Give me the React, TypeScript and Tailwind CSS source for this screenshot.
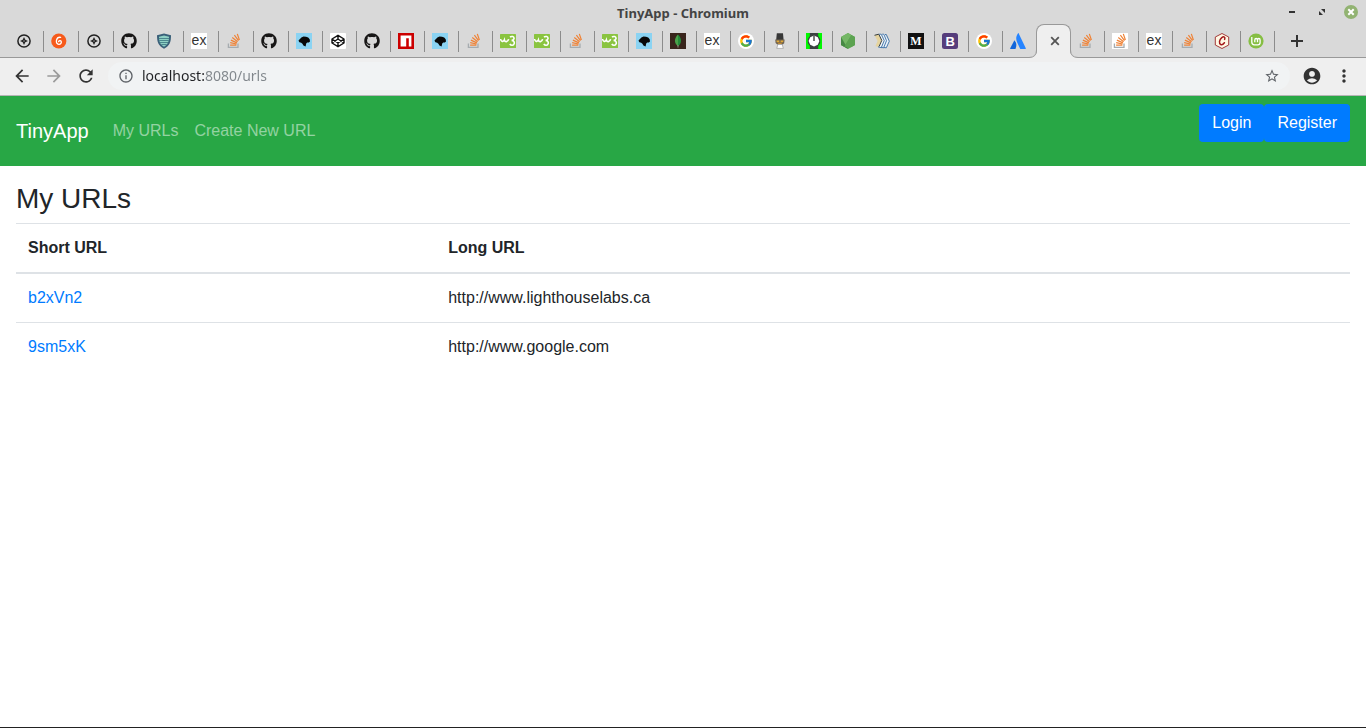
import type { ReactNode } from "react";
import { FaGithub } from "react-icons/fa";
import { FcGoogle } from "react-icons/fc";
import {
  MdAccountCircle,
  MdArrowBack,
  MdArrowForward,
  MdInfoOutline,
  MdMoreVert,
  MdRefresh,
  MdStarBorder,
} from "react-icons/md";

function Svg({ children }: { children: ReactNode }) {
  return (
    <svg viewBox="0 0 16 16" className="size-4 shrink-0" aria-hidden="true">
      {children}
    </svg>
  );
}

const Compass = () => (
  <Svg>
    <circle cx="8" cy="8" r="6.1" fill="none" stroke="#222" strokeWidth="1.5" />
    <path d="M8 4 9.3 6.7 12 8 9.3 9.3 8 12 6.7 9.3 4 8 6.7 6.7Z" fill="#222" />
    <circle cx="8" cy="8" r="0.8" fill="#999" />
  </Svg>
);

const Gitbook = () => (
  <Svg>
    <circle cx="7.8" cy="8" r="7.6" fill="#f65a1b" />
    <path
      d="M9.6 4.3C7.8 4 6 5.2 5.5 7.2C5 9.6 6 11.4 7.9 11.3C9.8 11.2 10.7 9.6 10.2 8.4C9.7 7.4 8.2 7.5 7.6 8.6"
      fill="none"
      stroke="#fff"
      strokeWidth="1.3"
      strokeLinecap="round"
    />
  </Svg>
);

const Github = () => <FaGithub className="size-4 shrink-0 text-[#181717]" aria-hidden="true" />;

const Shield = () => (
  <Svg>
    <path d="M8 .4 15 2.3C15 8.7 14 12.8 8 15.8 2 12.8 1 8.7 1 2.3Z" fill="#3a6079" />
    <path d="M8 2.4 13 3.8C12.9 8.4 12.2 11.3 8 13.7 3.8 11.3 3.1 8.4 3 3.8Z" fill="#8ed0c4" />
    <path d="M3 5.5H13M3.3 7.5H12.7M4 9.5H12M5.4 11.5H10.6" stroke="#3a7480" strokeWidth=".8" />
  </Svg>
);

const Express = () => (
  <Svg>
    <rect width="16" height="16" fill="#fff" />
    <text
      x="8"
      y="12"
      textAnchor="middle"
      className="fill-[#333] font-['Liberation_Sans',sans-serif] text-[14px]"
    >
      ex
    </text>
  </Svg>
);

const StackOverflow = () => (
  <Svg>
    <path d="M2.4 10.4V14.4H12V10.4" fill="none" stroke="#a6acb0" strokeWidth="1.3" />
    <path
      d="M4.1 12.1H10.4M4.2 9.7 10.5 11M4.9 7.1 10.9 9.9M6.3 4.5 11.6 8.7M8.4 2.2 12.5 7.6M11.3.9 13.4 7"
      stroke="#ef8236"
      strokeWidth="1.2"
    />
  </Svg>
);

const StackOverflowWhite = () => (
  <span className="flex size-4 shrink-0 bg-white">
    <StackOverflow />
  </span>
);

const DogHead = () => (
  <Svg>
    <rect width="16" height="16" fill="#8bd3f2" />
    <path
      d="M2.6 7.2 4 6 5.4 4.4 7.5 3.5 10 3.8 12.2 4.5 13.7 6.2 14 8.4 12.8 9.6 11.2 9.6 10.2 10.6 9.6 13.4 7.4 12.6 6.4 10.8 5.2 9.8 3.4 9.2 2.8 8.2Z"
      fill="#080808"
    />
  </Svg>
);

const Codepen = () => (
  <Svg>
    <rect width="16" height="16" rx="1" fill="#fff" />
    <path
      d="M8 2.3 14 6V10L8 13.7 2 10V6ZM8 2.3V6L2 10M8 6 14 10M8 13.7V10L2 6M8 10 14 6"
      fill="none"
      stroke="#111"
      strokeWidth="1.4"
      strokeLinejoin="round"
    />
  </Svg>
);

const Npm = () => (
  <Svg>
    <rect width="16" height="16" fill="#c00" />
    <path d="M2.6 2.6H13.4V13.4H10.8V5.3H8.2V13.4H2.6Z" fill="#fff" />
  </Svg>
);

const W3 = () => (
  <Svg>
    <rect y="1" width="16" height="14" rx=".6" fill="#8ac440" />
    <path
      d="M.6 6C.9 8.6 3.4 9.4 4.4 6.8 4.9 9.4 8 9.3 8.6 6.2M10 4C11.5 2.9 14.3 3.5 14 5.6 13.8 7 12.5 7.4 11.6 7.4 13.2 7.5 14.7 8.5 14.2 10.6 13.6 12.8 11 12.8 9.8 11"
      fill="none"
      stroke="#fff"
      strokeWidth="1.6"
    />
  </Svg>
);

const Mongo = () => (
  <Svg>
    <rect width="16" height="16" fill="#39251c" />
    <path d="M8 1.5C3.8 5.5 4 10.6 8 13Z" fill="#4aa24a" />
    <path d="M8 1.5C12.2 5.5 12 10.6 8 13Z" fill="#248b3a" />
    <path d="M8 12V14.6" stroke="#b8bba5" strokeWidth=".7" />
  </Svg>
);

const Google = () => (
  <span className="flex size-4 shrink-0 items-center justify-center rounded-full bg-white">
    <FcGoogle className="size-[14px]" aria-hidden="true" />
  </span>
);

const Mascot = () => (
  <Svg>
    <path d="M4.8.3H11L11.6 7H4.2Z" fill="#373737" />
    <path d="M3.2 6.5H12.6L12.2 10.2 10.6 11.5H5.2L3.6 10Z" fill="#6e6252" />
    <path d="M4.4 7.4H7.3V9.3H4.8ZM8.6 7.4H11.6L11 9.3H8.6Z" fill="#e0a937" />
    <path d="M5.5 9.7H10.2L9.3 11.1H6.4Z" fill="#c78b2c" />
    <path d="M5.8 11.4H10.2L11.3 15.4H4.8Z" fill="#fff" stroke="#8d8d8d" strokeWidth=".6" />
  </Svg>
);

const Watch = () => (
  <Svg>
    <rect width="16" height="16" fill="#00f800" />
    <path d="M3.8 0H12.2V3L14.2 6V10L12.2 13V16H3.8V13L1.8 10V6L3.8 3Z" fill="#3b4140" />
    <path d="M8 2.6 11.8 4.2 13.4 8 11.8 11.8 8 13.4 4.2 11.8 2.6 8 4.2 4.2Z" fill="#fff" />
    <path d="M8 2.6V8" stroke="#333" strokeWidth="1.3" />
  </Svg>
);

const NodeHex = () => (
  <Svg>
    <path d="M8 0 15 4V12L8 16 1 12V4Z" fill="#5ca351" />
    <path d="M8 0 1 4V12L4.2 13.8 11.4 2Z" fill="#75b766" />
    <path d="M1 4 8 16 1 12Z" fill="#468844" />
    <path d="M11.4 2 15 4V12L11 14.3 4.3 13.7Z" fill="#5ca351" />
  </Svg>
);

const Books = () => (
  <Svg>
    <path d="M.5 2.3 5 1 8 7.3 5.5 14.5 1.5 13 3.6 8Z" fill="#e5d39e" />
    <path d="M5 1H7.2L10.4 7.3 7.5 15 4.6 13.6 7.4 7.4Z" fill="#f3f7f8" />
    <path d="M8.3 1H10.3L15.5 8.4 12 15 7.8 13.8 10.7 8Z" fill="#eaf3fb" />
    <path d="M.5 2.3 4.8 1.2 7.8 7.4 5.1 13.5" fill="none" stroke="#353c42" strokeWidth="1" />
    <path
      d="M5.2 1.2H7.2L10.2 7.5 7.3 14.7 4 13.8M8.2 1.2H9.8L12.5 7.7 9.6 14.9 7 14.2M11 1.5H12.3L15.3 8.2 12.3 14.8 9.8 14.5"
      fill="none"
      stroke="#386da5"
      strokeWidth=".9"
    />
  </Svg>
);

const Medium = () => (
  <Svg>
    <rect width="16" height="16" fill="#111" />
    <text x="8" y="12.3" textAnchor="middle" fontSize="12" fontWeight="700" fontFamily="Liberation Serif, serif" fill="#fff">
      M
    </text>
  </Svg>
);

const Bootstrap = () => (
  <Svg>
    <rect width="16" height="16" rx="2.5" fill="#563d7c" />
    <text x="8.2" y="12.6" textAnchor="middle" fontSize="13" fontWeight="700" fontFamily="Liberation Sans, sans-serif" fill="#fff">
      B
    </text>
  </Svg>
);

const Atlassian = () => (
  <Svg>
    <path d="M4.4 7.2C6.8 9.7 6.8 12.5 5.5 16H.6C.1 16 0 15.7.2 15.3Z" fill="#1266db" />
    <path d="M7.9.4C8.1 0 8.5 0 8.7.4L15.8 15.3C16 15.7 15.8 16 15.4 16H10.8C10.4 16 10.2 15.8 10 15.4L7.1 9.3C5.8 6.3 5.8 3.3 7.9.4Z" fill="#2684ff" />
  </Svg>
);

const Chai = () => (
  <Svg>
    <path d="M8 .5 14.7 4V12L8 15.5 1.3 12V4Z" fill="#fff8e4" stroke="#a33a3a" strokeWidth="1" />
    <path
      d="M10.6 6.4C11.6 4.1 9.8 3 7.8 4.6 5.2 6.6 4.7 10.6 6.7 11.5 8.1 12 9.4 11.1 10.4 9.7"
      fill="none"
      stroke="#a3181b"
      strokeWidth="1.5"
      strokeLinecap="round"
    />
  </Svg>
);

const Mint = () => (
  <Svg>
    <circle cx="8" cy="8" r="7.6" fill="#86be43" />
    <path
      d="M3.8 4.1V9.1C3.8 10.9 4.7 11.8 6.3 11.8H9.8C11.3 11.8 12.1 10.9 12.1 9.5V6.9C12.1 5 9.5 5 9.5 6.9V9.2M9.5 6.9C9.5 5 6.8 5 6.8 6.9V9.2"
      fill="none"
      stroke="#fff"
      strokeWidth="1.3"
    />
  </Svg>
);

type Tab = { name: string; Icon: () => ReactNode };

const wideTabs: Tab[] = [
  { name: "Compass", Icon: Compass },
  { name: "GitBook", Icon: Gitbook },
  { name: "Compass", Icon: Compass },
  { name: "GitHub", Icon: Github },
  { name: "Shield", Icon: Shield },
  { name: "Express", Icon: Express },
  { name: "Stack Overflow", Icon: StackOverflow },
  { name: "GitHub", Icon: Github },
];

const narrowTabs: Tab[] = [
  { name: "Guide", Icon: DogHead },
  { name: "CodePen", Icon: Codepen },
  { name: "GitHub", Icon: Github },
  { name: "npm", Icon: Npm },
  { name: "Guide", Icon: DogHead },
  { name: "Stack Overflow", Icon: StackOverflow },
  { name: "W3Schools", Icon: W3 },
  { name: "W3Schools", Icon: W3 },
  { name: "Stack Overflow", Icon: StackOverflow },
  { name: "W3Schools", Icon: W3 },
  { name: "Guide", Icon: DogHead },
  { name: "MongoDB", Icon: Mongo },
  { name: "Express", Icon: Express },
  { name: "Google", Icon: Google },
  { name: "Mascot", Icon: Mascot },
  { name: "Watch", Icon: Watch },
  { name: "Node.js", Icon: NodeHex },
  { name: "Books", Icon: Books },
  { name: "Medium", Icon: Medium },
  { name: "Bootstrap", Icon: Bootstrap },
  { name: "Google", Icon: Google },
  { name: "Atlassian", Icon: Atlassian },
];

const trailingTabs: Tab[] = [
  { name: "Stack Overflow", Icon: StackOverflow },
  { name: "Stack Overflow", Icon: StackOverflowWhite },
  { name: "Express", Icon: Express },
  { name: "Stack Overflow", Icon: StackOverflow },
  { name: "Chai", Icon: Chai },
  { name: "Linux Mint", Icon: Mint },
];

function TabButton({ tab, wide, last }: { tab: Tab; wide?: boolean; last?: boolean }) {
  return (
    <button
      type="button"
      aria-label={tab.name}
      className={`${wide ? "w-[35px]" : "w-[34px]"} ${last ? "border-transparent" : "border-[#8c8c8c]"} mt-[7px] flex h-[21px] shrink-0 items-start border-r pt-[2px] pl-[7px]`}
    >
      <tab.Icon />
    </button>
  );
}

function TitleBar() {
  return (
    <div className="grid h-6 grid-cols-[1fr_auto_1fr] items-center px-2">
      <span />
      <span className="pt-px font-['Noto_Sans','Open_Sans',sans-serif] text-[13px] leading-4 font-bold text-[#444]">
        TinyApp - Chromium
      </span>
      <div className="flex items-center justify-end gap-[22px]">
        <button type="button" aria-label="Minimize">
          <svg viewBox="0 0 8 8" className="size-2">
            <path d="M1 4H7" stroke="#333" strokeWidth="2" />
          </svg>
        </button>
        <button type="button" aria-label="Restore">
          <svg viewBox="0 0 8 8" className="size-2">
            <path d="M3 1H7V5ZM1 3V7H5Z" fill="#333" />
          </svg>
        </button>
        <button type="button" aria-label="Close">
          <svg viewBox="0 0 14 14" className="-ml-1 size-[14px]">
            <circle cx="7" cy="7" r="7" fill="#92b372" />
            <path d="M4.3 4.3 9.7 9.7M9.7 4.3 4.3 9.7" stroke="#fff" strokeWidth="2" />
          </svg>
        </button>
      </div>
    </div>
  );
}

function TabStrip() {
  return (
    <div className="flex h-[34px] overflow-hidden">
      <div className="flex border-b border-[#999] pl-[9px]">
        {wideTabs.map((tab, i) => (
          <TabButton key={i} tab={tab} wide />
        ))}
        {narrowTabs.map((tab, i) => (
          <TabButton key={i} tab={tab} last={i === narrowTabs.length - 1} />
        ))}
      </div>
      <div className="relative -ml-px flex w-[35px] shrink-0 items-center justify-center rounded-t-[8px] border border-b-0 border-[#999] bg-[#efefef] pb-[2px] pl-[2px]">
        <svg viewBox="0 0 8 8" className="absolute bottom-0 -left-2 size-2" aria-hidden="true">
          <path d="M0 7.5Q8 7.5 8 0V8H0Z" fill="#efefef" />
          <path d="M0 7.5Q7.5 7.5 7.5 0" fill="none" stroke="#999" />
        </svg>
        <svg viewBox="0 0 8 8" className="absolute -right-2 bottom-0 size-2" aria-hidden="true">
          <path d="M8 7.5Q0 7.5 0 0V8H8Z" fill="#efefef" />
          <path d="M8 7.5Q.5 7.5 .5 0" fill="none" stroke="#999" />
        </svg>
        <button type="button" aria-label="Close tab">
          <svg viewBox="0 0 10 10" className="size-[10px]">
            <path d="M1.2 1.2 8.8 8.8M8.8 1.2 1.2 8.8" stroke="#555" strokeWidth="1.8" />
          </svg>
        </button>
      </div>
      <div className="flex grow border-b border-[#999]">
        {trailingTabs.map((tab, i) => (
          <TabButton key={i} tab={tab} />
        ))}
        <button type="button" aria-label="New tab" className="ml-4 flex items-center">
          <svg viewBox="0 0 12 12" className="size-3">
            <path d="M6 0V12M0 6H12" stroke="#333" strokeWidth="2" />
          </svg>
        </button>
      </div>
    </div>
  );
}

function Toolbar() {
  return (
    <div className="flex h-[38px] items-center border-b border-[#b5b5b5] bg-[#efefef] px-3 pb-px text-[#333]">
      <div className="flex items-center gap-3">
        <button type="button" aria-label="Back">
          <MdArrowBack className="size-5" />
        </button>
        <button type="button" aria-label="Forward" className="text-[#9b9b9b]">
          <MdArrowForward className="size-5" />
        </button>
        <button type="button" aria-label="Reload">
          <MdRefresh className="size-5" />
        </button>
      </div>
      <div className="ml-3 flex h-7 grow items-center rounded-full bg-[#f1f3f4] px-[10px] text-[#5f6368]">
        <button type="button" aria-label="Site information">
          <MdInfoOutline className="size-4" />
        </button>
        <input
          aria-label="Address"
          defaultValue="localhost:8080/urls"
          className="ml-2 grow bg-[linear-gradient(to_right,#202124_62px,#80868b_62px)] bg-clip-text font-['Noto_Sans','Open_Sans',sans-serif] text-[14px] leading-5 text-transparent outline-none"
        />
        <button type="button" aria-label="Bookmark">
          <MdStarBorder className="size-4" />
        </button>
      </div>
      <button type="button" aria-label="Profile" className="ml-3">
        <MdAccountCircle className="size-5" />
      </button>
      <button type="button" aria-label="Menu" className="ml-3">
        <MdMoreVert className="size-5" />
      </button>
    </div>
  );
}

function Navbar() {
  return (
    <nav className="flex items-center bg-[#28a745] px-4 py-2">
      <a href="#home" className="mr-6 text-[20px] leading-[30px] text-white">
        TinyApp
      </a>
      <div className="flex gap-4 text-white/50">
        <a href="#urls">My URLs</a>
        <a href="#new">Create New URL</a>
      </div>
      <div className="mb-4 ml-auto flex text-white">
        <button type="button" className="rounded-[4px] bg-[#007bff] px-[13px] py-[7px]">
          Login
        </button>
        <button type="button" className="rounded-[4px] bg-[#007bff] px-[13px] py-[7px]">
          Register
        </button>
      </div>
    </nav>
  );
}

const urls = [
  { short: "b2xVn2", long: "http://www.lighthouselabs.ca" },
  { short: "9sm5xK", long: "http://www.google.com" },
];

export default function App() {
  return (
    <div className="flex min-h-screen flex-col border-b border-[#222] bg-white font-['Liberation_Sans',sans-serif] text-[16px] leading-6 text-[#212529]">
      <header className="bg-[#d9d9d9]">
        <TitleBar />
        <TabStrip />
        <Toolbar />
      </header>
      <Navbar />
      <main className="px-4 pt-4">
        <h1 className="mb-[7px] text-[28px] leading-[34px]">My URLs</h1>
        <table className="w-full table-fixed border-collapse text-left">
          <thead>
            <tr className="border-t border-b-2 border-[#dee2e6]">
              <th className="w-[31.5%] p-3 font-bold">Short URL</th>
              <th className="p-3 font-bold">Long URL</th>
            </tr>
          </thead>
          <tbody>
            {urls.map((url) => (
              <tr key={url.short} className="border-b border-[#dee2e6] last:border-b-0">
                <td className="p-3">
                  <a href={`#${url.short}`} className="text-[#007bff]">
                    {url.short}
                  </a>
                </td>
                <td className="p-3">{url.long}</td>
              </tr>
            ))}
          </tbody>
        </table>
      </main>
    </div>
  );
}
